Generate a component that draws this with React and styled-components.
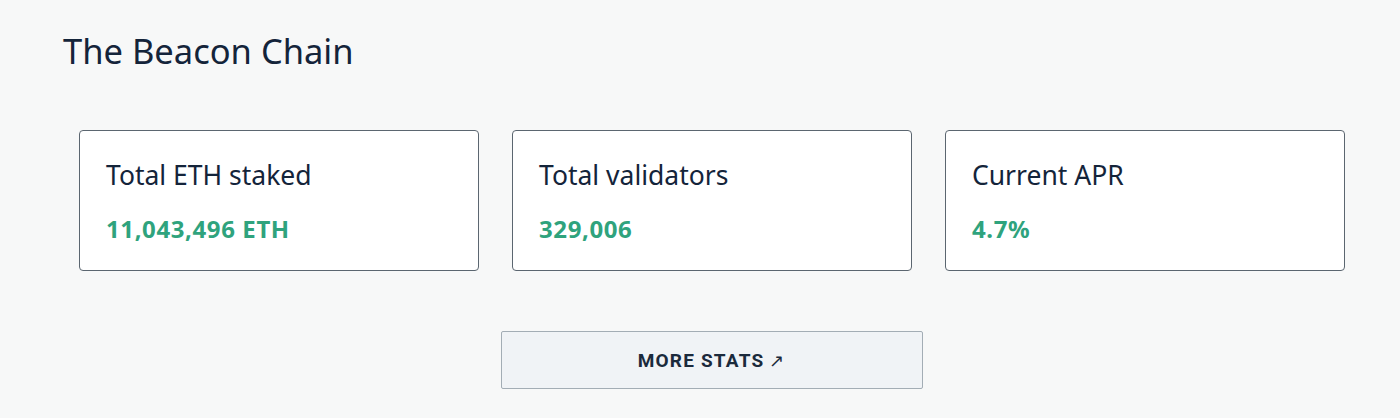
import React from "react";
import styled, { createGlobalStyle } from "styled-components";

const Global = createGlobalStyle`
  html, body { margin: 0; padding: 0; background: #f7f8f8; }
  body { font-family: "Noto Sans", "Open Sans", sans-serif; }
`;

const Page = styled.div`
  width: 1400px;
  height: 418px;
  box-sizing: border-box;
  padding: 28px 55px 0 63px;
  background: #f7f8f8;
`;

const Heading = styled.h2`
  margin: 0;
  font-family: "Noto Sans", sans-serif;
  font-weight: 400;
  font-size: 34.5px;
  line-height: 46px;
  color: #14243a;
`;

const Cards = styled.div`
  display: grid;
  grid-template-columns: repeat(3, 400px);
  column-gap: 33px;
  margin: 56px 0 0 16px;
`;

const Card = styled.div`
  box-sizing: border-box;
  height: 141px;
  background: #ffffff;
  border: 1px solid #5b6670;
  border-radius: 4px;
  padding: 26px 26px 0 26px;
`;

const Label = styled.div`
  font-size: 26.5px;
  line-height: 36px;
  color: #14243a;
`;

const Value = styled.div`
  margin-top: 21px;
  font-size: 24px;
  font-weight: 700;
  letter-spacing: 0.6px;
  line-height: 30px;
  color: #2fa37d;
`;

const ButtonRow = styled.div`
  display: flex;
  justify-content: center;
  margin-top: 60px;
  padding-left: 16px;
`;

const MoreButton = styled.a`
  box-sizing: border-box;
  width: 422px;
  height: 58px;
  display: flex;
  align-items: center;
  justify-content: center;
  gap: 5px;
  padding-right: 2px;
  background: #f0f3f6;
  border: 1px solid #a3adb5;
  border-radius: 2px;
  font-family: Roboto, "Noto Sans", sans-serif;
  font-weight: 700;
  font-size: 19px;
  letter-spacing: 1.2px;
  color: #1b2a3c;
  text-decoration: none;
`;

const Arrow = styled.span`
  font-weight: 400;
  font-size: 18px;
  letter-spacing: 0;
`;

const stats = [
  { label: "Total ETH staked", value: "11,043,496 ETH" },
  { label: "Total validators", value: "329,006" },
  { label: "Current APR", value: "4.7%" },
];

export default function App() {
  return (
    <Page>
      <Global />
      <Heading>The Beacon Chain</Heading>
      <Cards>
        {stats.map((s) => (
          <Card key={s.label}>
            <Label>{s.label}</Label>
            <Value>{s.value}</Value>
          </Card>
        ))}
      </Cards>
      <ButtonRow>
        <MoreButton href="#">
          MORE STATS<Arrow>↗</Arrow>
        </MoreButton>
      </ButtonRow>
    </Page>
  );
}
